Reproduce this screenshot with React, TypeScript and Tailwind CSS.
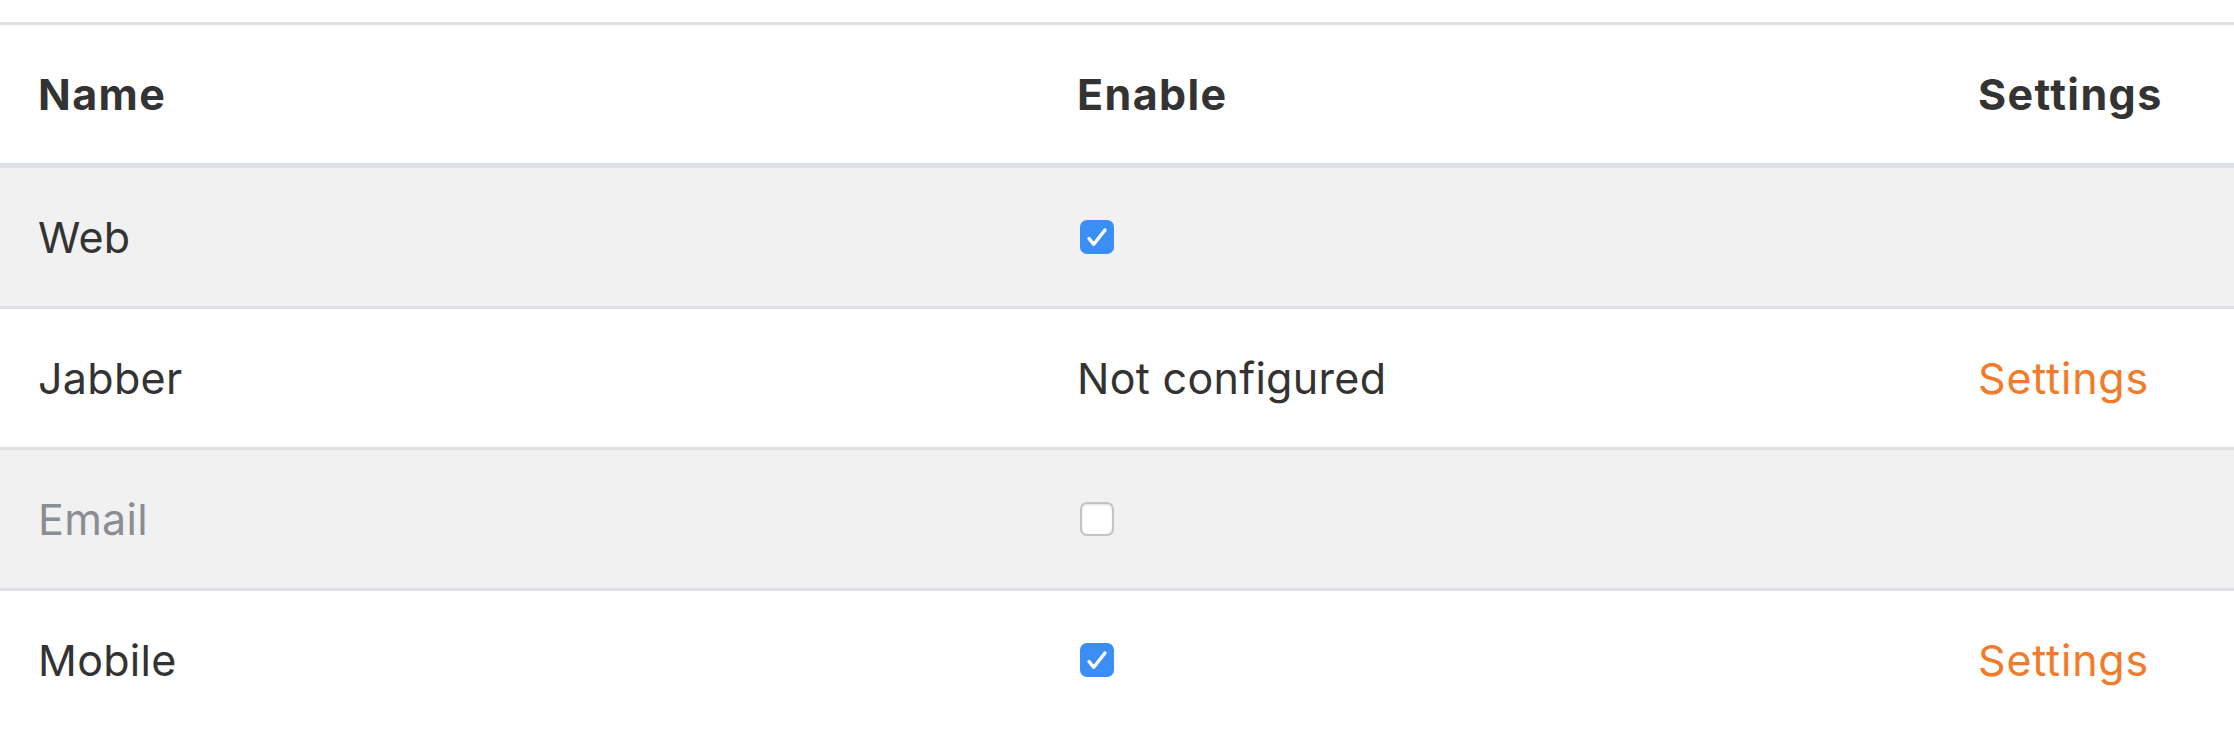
import { useState } from "react";

type Row = {
  name: string;
  enabled: boolean | null;
  settings: boolean;
  muted?: boolean;
};

const initialRows: Row[] = [
  { name: "Web", enabled: true, settings: false },
  { name: "Jabber", enabled: null, settings: true },
  { name: "Email", enabled: false, settings: false, muted: true },
  { name: "Mobile", enabled: true, settings: true },
];

function Checkbox({ checked, onChange }: { checked: boolean; onChange: () => void }) {
  return (
    <button
      type="button"
      onClick={onChange}
      className={
        checked
          ? "ml-[3px] w-[34px] h-[34px] rounded-[7px] bg-[#3b8ef5] flex items-center justify-center"
          : "ml-[3px] w-[34px] h-[34px] rounded-[7px] bg-white border-2 border-[#c4c4c4] shadow-[inset_0_1px_2px_rgba(0,0,0,0.12)]"
      }
    >
      {checked && (
        <svg viewBox="0 0 34 34" className="w-[34px] h-[34px]" fill="none">
          <path
            d="M9 18.5l4.8 5.8L25 10"
            stroke="white"
            strokeWidth="3.4"
            strokeLinecap="round"
            strokeLinejoin="round"
          />
        </svg>
      )}
    </button>
  );
}

export default function App() {
  const [rows, setRows] = useState(initialRows);

  const toggle = (i: number) =>
    setRows((r) => r.map((row, j) => (j === i ? { ...row, enabled: !row.enabled } : row)));

  return (
    <div className="min-h-screen bg-white pt-[22px] text-[#333] font-['Inter',sans-serif] text-[43px] tracking-[0.3px]">
      <div className="border-t-[3px] border-[#dde0e4]">
        {/* Header */}
        <div className="flex items-center h-[143px] border-b-[5px] border-[#dde0e4] font-bold tracking-[1.4px]">
          <div className="w-[1077px] pl-[38px]">Name</div>
          <div className="w-[901px]">Enable</div>
          <div className="flex-1">Settings</div>
        </div>

        {/* Rows */}
        {rows.map((row, i) => (
          <div
            key={row.name}
            className={`flex items-center ${
              i === rows.length - 1 ? "h-[138px]" : "h-[141px] border-b-[3px] border-[#dde0e4]"
            } ${i % 2 === 0 ? "bg-[#f1f1f1]" : "bg-white"}`}
          >
            <div className={`w-[1077px] pl-[38px] ${row.muted ? "text-[#8a8d93]" : ""}`}>
              {row.name}
            </div>
            <div className="w-[901px] flex items-center">
              {row.enabled === null ? (
                <span>Not configured</span>
              ) : (
                <Checkbox checked={row.enabled} onChange={() => toggle(i)} />
              )}
            </div>
            <div className="flex-1">
              {row.settings && (
                <a href="#" className="text-[#f27b2a] tracking-[0.8px]">
                  Settings
                </a>
              )}
            </div>
          </div>
        ))}
      </div>
    </div>
  );
}
